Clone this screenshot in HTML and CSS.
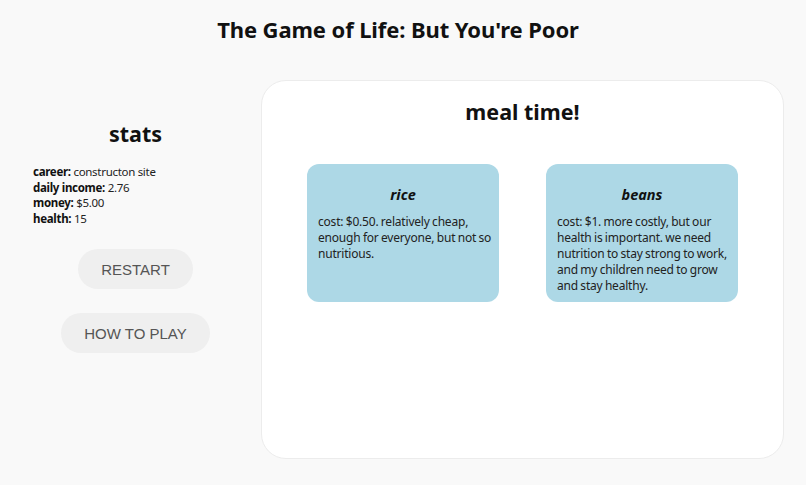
FILE: index.html
```html
<!DOCTYPE html>
<html>
<head>
<meta charset="utf-8">
<link rel="stylesheet" href="styles.css">
</head>
<body>
<h1 class="title">The Game of Life: But You're Poor</h1>
<div class="layout">
  <aside class="sidebar">
    <h2 class="side-heading">stats</h2>
    <div class="stats">
      <div><b>career:</b> constructon site</div>
      <div><b>daily income:</b> 2.76</div>
      <div><b>money:</b> $5.00</div>
      <div><b>health:</b> 15</div>
    </div>
    <div class="buttons">
      <button class="btn">RESTART</button>
      <button class="btn">HOW TO PLAY</button>
    </div>
  </aside>
  <main class="panel">
    <h2 class="panel-heading">meal time!</h2>
    <div class="choices">
      <div class="card">
        <h3 class="card-title">rice</h3>
        <p class="card-text">cost: $0.50. relatively cheap, enough for everyone, but not so nutritious.</p>
      </div>
      <div class="card">
        <h3 class="card-title">beans</h3>
        <p class="card-text">cost: $1. more costly, but our health is important. we need nutrition to stay strong to work, and my children need to grow and stay healthy.</p>
      </div>
    </div>
  </main>
</div>
</body>
</html>
```
FILE: styles.css
```css
html, body {
  margin: 0;
  padding: 0;
}
body {
  background: #f9f9f9;
  font-family: "Noto Sans", "Open Sans", sans-serif;
  color: #111;
  width: 806px;
  height: 485px;
  overflow: hidden;
}
.title {
  margin: 0;
  padding-top: 14px;
  padding-right: 10px;
  text-align: center;
  font-size: 22px;
  letter-spacing: -0.1px;
  font-weight: bold;
  line-height: 30px;
  height: 30px;
}
.layout {
  display: flex;
  margin-top: 36px;
}
.sidebar {
  width: 261px;
  flex: none;
}
.side-heading {
  margin: 39px 0 0 0;
  text-align: center;
  font-size: 21.5px;
  line-height: 30px;
  font-weight: bold;
  padding-left: 10px;
}
.stats {
  margin: 15px 0 0 33px;
  font-size: 11.5px;
  letter-spacing: -0.3px;
  line-height: 15.5px;
  color: #222;
}
.stats b {
  color: #111;
}
.buttons {
  display: flex;
  flex-direction: column;
  align-items: center;
  gap: 24px;
  margin-top: 23px;
}
.btn {
  background: #efefef;
  border: none;
  border-radius: 20px;
  height: 40px;
  padding: 0 23px;
  font-family: "Liberation Sans", Arial, sans-serif;
  font-size: 15px;
  color: #555;
  margin-left: 10px;
}
.panel {
  width: 523px;
  height: 379px;
  box-sizing: border-box;
  background: #fff;
  border: 1px solid #ececec;
  border-radius: 25px;
}
.panel-heading {
  margin: 16px 0 0 0;
  text-align: center;
  font-size: 21.5px;
  line-height: 30px;
  font-weight: bold;
}
.choices {
  display: flex;
  justify-content: center;
  gap: 47px;
  margin-top: 37px;
}
.card {
  width: 192px;
  height: 138px;
  box-sizing: border-box;
  background: #add8e6;
  border-radius: 12px;
  padding: 20px 7px 0 11px;
}
.card-title {
  margin: 0;
  text-align: center;
  font-size: 14.5px;
  font-style: italic;
  font-weight: bold;
  line-height: 20px;
  padding-right: 4px;
}
.card-text {
  margin: 10px 0 0 0;
  font-size: 12px;
  letter-spacing: -0.2px;
  word-spacing: -0.5px;
  line-height: 16px;
  color: #222;
}
```
